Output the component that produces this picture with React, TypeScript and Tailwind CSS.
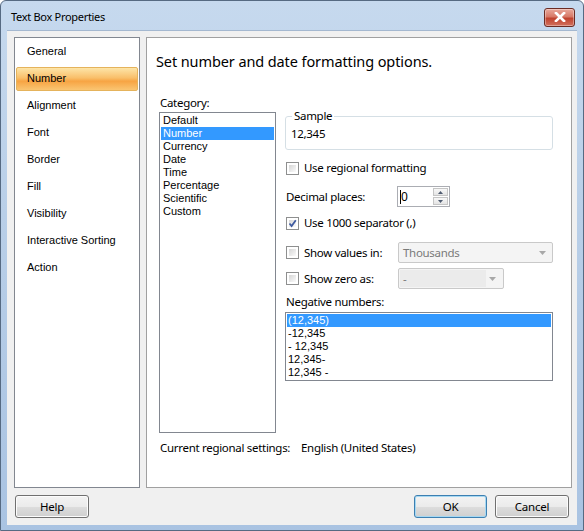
import React from "react";

const navItems = [
  "General",
  "Number",
  "Alignment",
  "Font",
  "Border",
  "Fill",
  "Visibility",
  "Interactive Sorting",
  "Action",
];

const categories = ["Default", "Number", "Currency", "Date", "Time", "Percentage", "Scientific", "Custom"];

const negatives = ["(12,345)", "-12,345", "- 12,345", "12,345-", "12,345 -"];

const Checkbox: React.FC<{ checked?: boolean }> = ({ checked }) => (
  <div className="w-[13px] h-[13px] shrink-0 border border-[#8e8f8f] bg-white p-[2px]">
    <div className="w-full h-full bg-gradient-to-br from-[#d6d6d6] to-[#fbfbfb] relative">
      {checked && (
        <svg viewBox="0 0 9 9" className="absolute -left-[1px] -top-[1px] w-[9px] h-[9px]">
          <path d="M1.5 4.5 L3.6 7 L7.8 1.2" fill="none" stroke="#3f5ba0" strokeWidth="1.8" />
        </svg>
      )}
    </div>
  </div>
);

const Arrow: React.FC = () => (
  <svg viewBox="0 0 7 4" className="w-[7px] h-[4px]">
    <path d="M0 0 L7 0 L3.5 4 Z" fill="#a8a8a8" />
  </svg>
);

const Button: React.FC<{ label: string; focus?: boolean }> = ({ label, focus }) => (
  <div
    className={
      "h-[23px] rounded-[3px] border flex items-center justify-center text-[11.5px] tracking-[-0.2px] text-black bg-[linear-gradient(to_bottom,#f3f3f3_0%,#ebebeb_50%,#dddddd_51%,#cfcfcf_100%)] " +
      (focus ? "border-[#3c7fb1] shadow-[inset_0_0_0_1px_#a6d8f2]" : "border-[#707070] shadow-[inset_0_0_0_1px_#fcfcfc]")
    }
  >
    {label}
  </div>
);

export default function App() {
  return (
    <div className="w-[584px] h-[531px] font-['Noto_Sans',sans-serif] text-black bg-[linear-gradient(to_bottom,#c6d9ee,#b9cfe8_40%,#a9c3e2)] border border-[#566a82] rounded-t-[6px] flex flex-col overflow-hidden">
      {/* title bar */}
      <div className="h-[29px] shrink-0 flex items-center justify-between pl-[10px] pr-[8px]">
        <span className="text-[11px] leading-none pt-[1px] tracking-[-0.3px]">Text Box Properties</span>
        <div className="w-[31px] h-[19px] mt-[3px] rounded-[3px] border border-[#6b2c24] bg-[linear-gradient(to_bottom,#e9a99c,#d77967_45%,#c0432f_55%,#d2715e)] flex items-center justify-center shadow-[inset_0_0_0_1px_rgba(255,255,255,0.35)]">
          <svg viewBox="0 0 12 10" className="w-[12px] h-[10px]">
            <path d="M2 1 L10 9 M10 1 L2 9" stroke="#ffffff" strokeWidth="2.6" strokeLinecap="square" />
          </svg>
        </div>
      </div>

      {/* body */}
      <div className="flex-1 ml-[6px] mr-[6px] mb-[5px] bg-[#f0f0f0] border-t border-[#a4b8d0] flex flex-col">
        <div className="flex pt-[6px] pl-[7px] gap-[6px]">
          {/* nav */}
          <div className="w-[126px] h-[451px] bg-white border border-[#828790] font-['Liberation_Sans',Arial,sans-serif] text-[11px]">
            {navItems.map((item) => (
              <div key={item} className="h-[27px] flex items-center px-[1px]">
                <div
                  className={
                    "w-full h-[24px] flex items-center rounded-[2px] " +
                    (item === "Number"
                      ? "border border-[#e5b35c] bg-[linear-gradient(to_bottom,#fde5a8,#f9bf6a_45%,#f7a443_60%,#fac572)] pl-[10px]"
                      : "pl-[11px]")
                  }
                >
                  {item}
                </div>
              </div>
            ))}
          </div>

          {/* main panel */}
          <div className="w-[426px] h-[451px] bg-white border border-[#a0a0a0] pl-[9px] pt-[14px] text-[11.5px] tracking-[-0.3px]">
            <div className="h-[20px] flex items-center text-[14.5px] tracking-[-0.1px]">
              Set number and date formatting options.
            </div>

            <div className="flex pl-[3px] mt-[23px] gap-[9px]">
              {/* category column */}
              <div className="w-[117px] flex flex-col">
                <div className="h-[16px] flex items-center pl-[1px]">Category:</div>
                <div className="mt-[1px] h-[321px] border border-[#828790] pt-[1px] px-[1px] font-['Liberation_Sans',Arial,sans-serif] text-[11px] tracking-normal">
                  {categories.map((c) => (
                    <div
                      key={c}
                      className={
                        "h-[13px] leading-[13px] pl-[2px] " + (c === "Number" ? "bg-[#3399ff] text-white" : "")
                      }
                    >
                      {c}
                    </div>
                  ))}
                </div>
              </div>

              {/* options column */}
              <div className="w-[268px] flex flex-col mt-[21px]">
                <div className="relative h-[34px] border border-[#d5dfe5] rounded-[3px] pl-[5px] pt-[8px]">
                  <span className="absolute -top-[9px] left-[6px] bg-white px-[2px] leading-[16px]">Sample</span>
                  <span className="leading-[16px]">12,345</span>
                </div>

                <div className="mt-[8px] h-[20px] flex items-center pl-[1px] gap-[5px]">
                  <Checkbox />
                  <span>Use regional formatting</span>
                </div>

                <div className="mt-[8px] h-[21px] flex items-center pl-[1px]">
                  <span className="w-[111px]">Decimal places:</span>
                  <div className="w-[53px] h-[21px] border border-[#abadb3] flex items-center justify-between pl-[2px] pr-[1px]">
                    <div className="relative leading-none text-[12px]">
                      <span className="absolute left-0 -top-[1px] w-[1px] h-[14px] bg-black" />
                      <span className="pl-[1px]">0</span>
                    </div>
                    <div className="w-[15px] h-[17px] flex flex-col gap-[1px]">
                      <div className="flex-1 border border-[#c5c5c5] bg-[linear-gradient(to_bottom,#f8f8f8,#e4e4e4)] flex items-center justify-center">
                        <svg viewBox="0 0 5 3" className="w-[5px] h-[3px]">
                          <path d="M0 3 L5 3 L2.5 0 Z" fill="#4e5b70" />
                        </svg>
                      </div>
                      <div className="flex-1 border border-[#c5c5c5] bg-[linear-gradient(to_bottom,#f8f8f8,#e4e4e4)] flex items-center justify-center">
                        <svg viewBox="0 0 5 3" className="w-[5px] h-[3px]">
                          <path d="M0 0 L5 0 L2.5 3 Z" fill="#4e5b70" />
                        </svg>
                      </div>
                    </div>
                  </div>
                </div>

                <div className="mt-[6px] h-[20px] flex items-center pl-[1px] gap-[5px]">
                  <Checkbox checked />
                  <span>Use 1000 separator (,)</span>
                </div>

                <div className="mt-[9px] h-[21px] flex items-center pl-[1px]">
                  <div className="w-[112px] flex items-center gap-[5px]">
                    <Checkbox />
                    <span>Show values in:</span>
                  </div>
                  <div className="w-[155px] h-[21px] rounded-[2px] border border-[#c9c9c9] bg-[#f4f4f4] flex items-center justify-between pl-[4px] pr-[6px] text-[#7a7a7a]">
                    <span>Thousands</span>
                    <Arrow />
                  </div>
                </div>

                <div className="mt-[5px] h-[21px] flex items-center pl-[1px]">
                  <div className="w-[112px] flex items-center gap-[5px]">
                    <Checkbox />
                    <span>Show zero as:</span>
                  </div>
                  <div className="w-[106px] h-[21px] rounded-[2px] border border-[#c9c9c9] bg-[#f4f4f4] flex items-center justify-between pl-[1px] py-[1px] pr-[7px] text-[#7a7a7a]">
                    <div className="w-[86px] h-full bg-[#ebebeb] flex items-center pl-[3px]">-</div>
                    <Arrow />
                  </div>
                </div>

                <div className="mt-[5px] h-[16px] flex items-center pl-[1px]">Negative numbers:</div>
                <div className="mt-[2px] h-[69px] border border-[#828790] pt-[1px] px-[1px] font-['Liberation_Sans',Arial,sans-serif] text-[11px] tracking-normal">
                  {negatives.map((n, i) => (
                    <div
                      key={n}
                      className={"h-[13px] leading-[13px] pl-[1px] " + (i === 0 ? "bg-[#3399ff] text-white" : "")}
                    >
                      {n}
                    </div>
                  ))}
                </div>
              </div>
            </div>

            <div className="mt-[7px] ml-[4px] h-[16px] flex items-center whitespace-nowrap">
              <span className="w-[141px] shrink-0">Current regional settings:</span>
              <span>English (United States)</span>
            </div>
          </div>
        </div>

        {/* buttons */}
        <div className="mt-[7px] flex items-center justify-between px-[8px]">
          <div className="w-[74px]">
            <Button label="Help" />
          </div>
          <div className="flex gap-[8px]">
            <div className="w-[73px]">
              <Button label="OK" focus />
            </div>
            <div className="w-[74px]">
              <Button label="Cancel" />
            </div>
          </div>
        </div>
      </div>
    </div>
  );
}
